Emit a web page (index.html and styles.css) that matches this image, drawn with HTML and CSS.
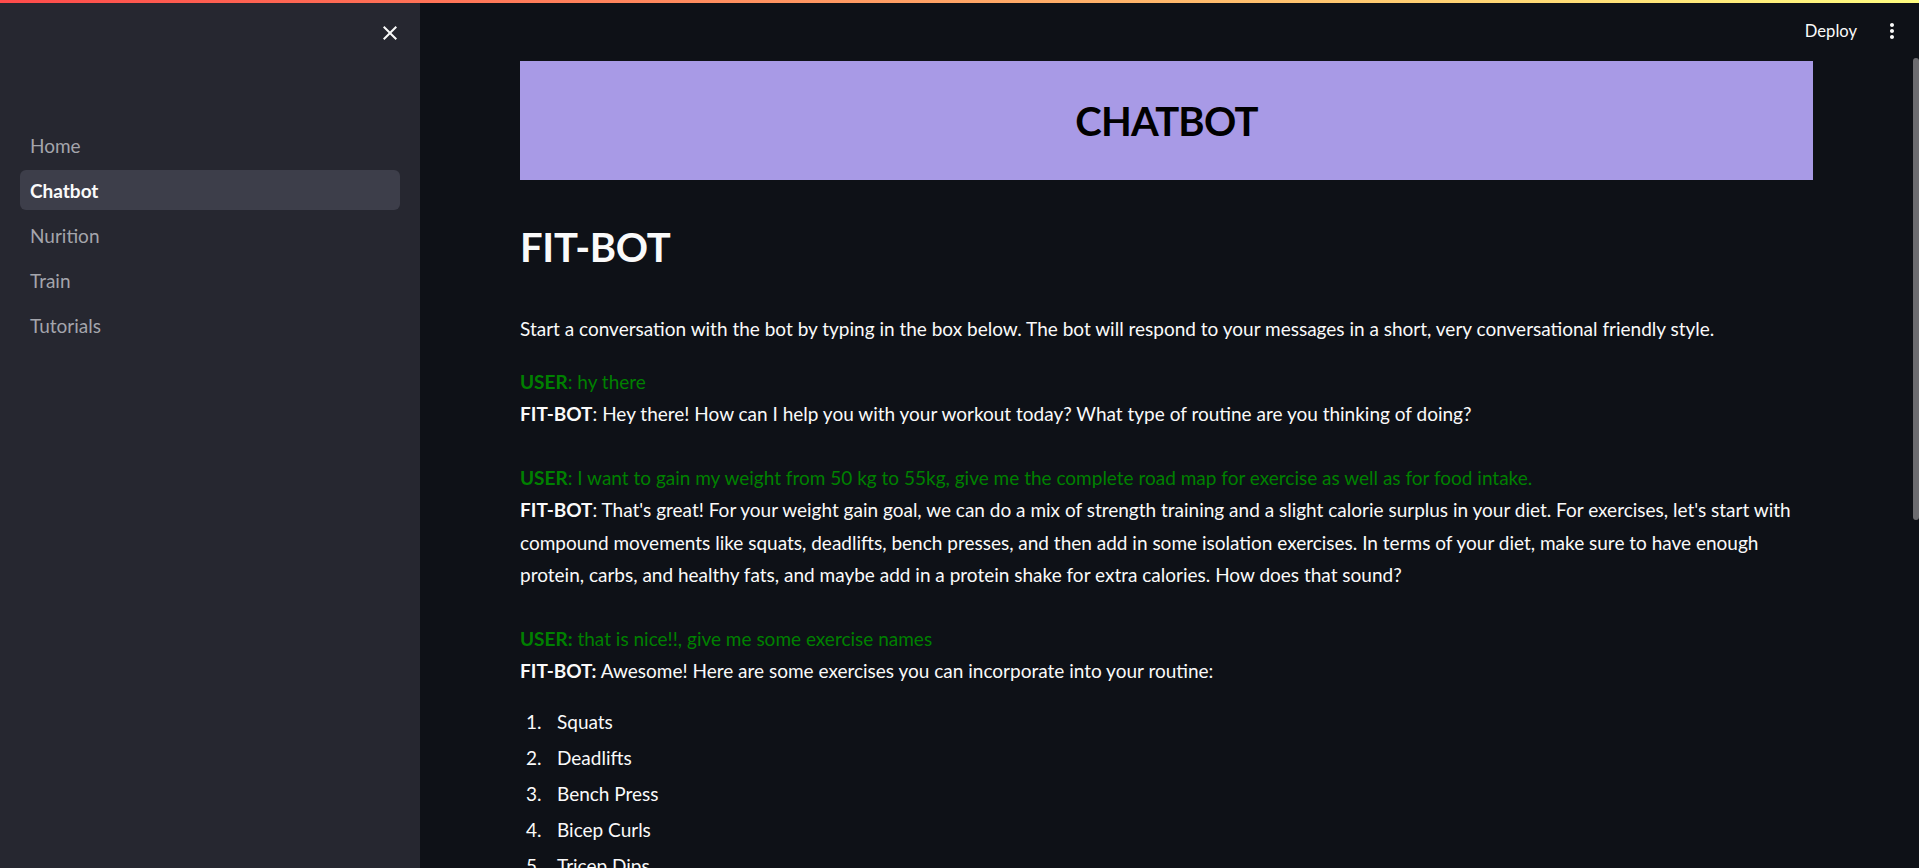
FILE: index.html
```html
<!DOCTYPE html>
<html lang="en">
<head>
<meta charset="utf-8">
<title>Chatbot</title>
<link rel="stylesheet" href="styles.css">
</head>
<body>
<div class="decoration"></div>
<div class="app">
  <aside class="sidebar">
    <div class="side-head">
      <svg class="close-icon" viewBox="0 0 24 24" aria-hidden="true"><path d="M19 6.41L17.59 5 12 10.59 6.41 5 5 6.41 10.59 12 5 17.59 6.41 19 12 13.41 17.59 19 19 17.59 13.41 12z"/></svg>
    </div>
    <nav class="nav">
      <a class="nav-item">Home</a>
      <a class="nav-item active">Chatbot</a>
      <a class="nav-item">Nurition</a>
      <a class="nav-item">Train</a>
      <a class="nav-item">Tutorials</a>
    </nav>
  </aside>
  <main class="main">
    <header class="header">
      <span class="deploy">Deploy</span>
      <svg class="kebab" viewBox="0 0 24 24" aria-hidden="true"><path d="M12 8c1.1 0 2-.9 2-2s-.9-2-2-2-2 .9-2 2 .9 2 2 2zm0 2c-1.1 0-2 .9-2 2s.9 2 2 2 2-.9 2-2-.9-2-2-2zm0 6c-1.1 0-2 .9-2 2s.9 2 2 2 2-.9 2-2-.9-2-2-2z"/></svg>
    </header>
    <section class="content">
      <div class="banner"><h2 class="banner-title">CHATBOT</h2></div>
      <h1 class="title">FIT-BOT</h1>
      <p class="intro">Start a conversation with the bot by typing in the box below. The bot will respond to your messages in a short, very conversational friendly style.</p>
      <div class="chat">
        <div class="exchange">
          <p class="user"><b>USER</b>: hy there</p>
          <p class="bot"><b>FIT-BOT</b>: Hey there! How can I help you with your workout today? What type of routine are you thinking of doing?</p>
        </div>
        <div class="exchange">
          <p class="user"><b>USER</b>: I want to gain my weight from 50 kg to 55kg, give me the complete road map for exercise as well as for food intake.</p>
          <p class="bot"><b>FIT-BOT</b>: That's great! For your weight gain goal, we can do a mix of strength training and a slight calorie surplus in your diet. For exercises, let's start with compound movements like squats, deadlifts, bench presses, and then add in some isolation exercises. In terms of your diet, make sure to have enough protein, carbs, and healthy fats, and maybe add in a protein shake for extra calories. How does that sound?</p>
        </div>
        <div class="exchange last">
          <p class="user"><b>USER:</b> that is nice!!, give me some exercise names</p>
          <p class="bot"><b>FIT-BOT:</b> Awesome! Here are some exercises you can incorporate into your routine:</p>
        </div>
        <ol class="list">
          <li>Squats</li>
          <li>Deadlifts</li>
          <li>Bench Press</li>
          <li>Bicep Curls</li>
          <li>Tricep Dips</li>
        </ol>
      </div>
    </section>
    <div class="scrollbar"></div>
  </main>
</div>
</body>
</html>
```
FILE: styles.css
```css
* { box-sizing: border-box; }
html, body { height: 100%; }
body {
  margin: 0;
  overflow: hidden;
  background: #0e1117;
  color: #fafafa;
  font-family: Lato, "Noto Sans", sans-serif;
}
.decoration {
  position: absolute;
  top: 0; left: 0; right: 0;
  height: 3px;
  z-index: 10;
  background: linear-gradient(90deg, #ff4b4b, #fffd80);
}
.app { display: flex; height: 100vh; }

/* sidebar */
.sidebar {
  width: 420px;
  flex: none;
  background: #262730;
  display: flex;
  flex-direction: column;
}
.side-head {
  display: flex;
  justify-content: flex-end;
  padding: 21px 18px 0 0;
}
.close-icon { width: 24px; height: 24px; fill: #fafafa; display: block; }
.nav {
  margin-top: 80px;
  padding: 0 20px;
  display: flex;
  flex-direction: column;
  gap: 5px;
}
.nav-item {
  height: 40px;
  display: flex;
  align-items: center;
  padding-left: 10px;
  border-radius: 6px;
  font-size: 19px;
  color: #a4a5ac;
}
.nav-item.active {
  background: #3d3e4a;
  color: #fafafa;
  font-weight: 700;
}

/* main */
.main {
  flex: 1;
  min-width: 0;
  position: relative;
  display: flex;
  flex-direction: column;
}
.header {
  height: 61px;
  flex: none;
  display: flex;
  justify-content: flex-end;
  align-items: flex-start;
  gap: 23px;
  padding: 19px 15px 0 0;
}
.deploy { font-size: 16.6px; line-height: 24px; color: #fafafa; }
.kebab { width: 24px; height: 24px; fill: #fafafa; display: block; }

.content { padding: 0 106px 0 100px; }
.banner {
  height: 119px;
  background: #a89ae6;
  display: flex;
  align-items: center;
  justify-content: center;
}
.banner-title {
  margin: 0;
  font-size: 40px;
  line-height: 1;
  font-weight: 700;
  letter-spacing: -0.8px;
  color: #000;
}
.title {
  margin: 42px 0 0;
  font-size: 40px;
  line-height: 50px;
  font-weight: 700;
  letter-spacing: -0.3px;
}
.intro {
  margin: 41px 0 20px;
  font-size: 19px;
  line-height: 32.5px;
}
.chat { font-size: 19px; line-height: 32.5px; }
.chat p { margin: 0; }
.chat b { font-weight: 700; }
.exchange { margin-bottom: 31px; }
.exchange.last { margin-bottom: 18px; }
.user { color: #008000; }
.bot { color: #fafafa; }
.list {
  margin: 0;
  padding: 0;
  list-style: none;
  counter-reset: n;
}
.list li {
  counter-increment: n;
  display: flex;
  padding-bottom: 3.5px;
}
.list li::before {
  content: counter(n) ".";
  width: 31px;
  padding-left: 6px;
  flex: none;
}
.scrollbar {
  position: absolute;
  top: 58px;
  right: 0;
  width: 6px;
  height: 462px;
  background: #6c6c70;
  border-radius: 3px;
}
```
